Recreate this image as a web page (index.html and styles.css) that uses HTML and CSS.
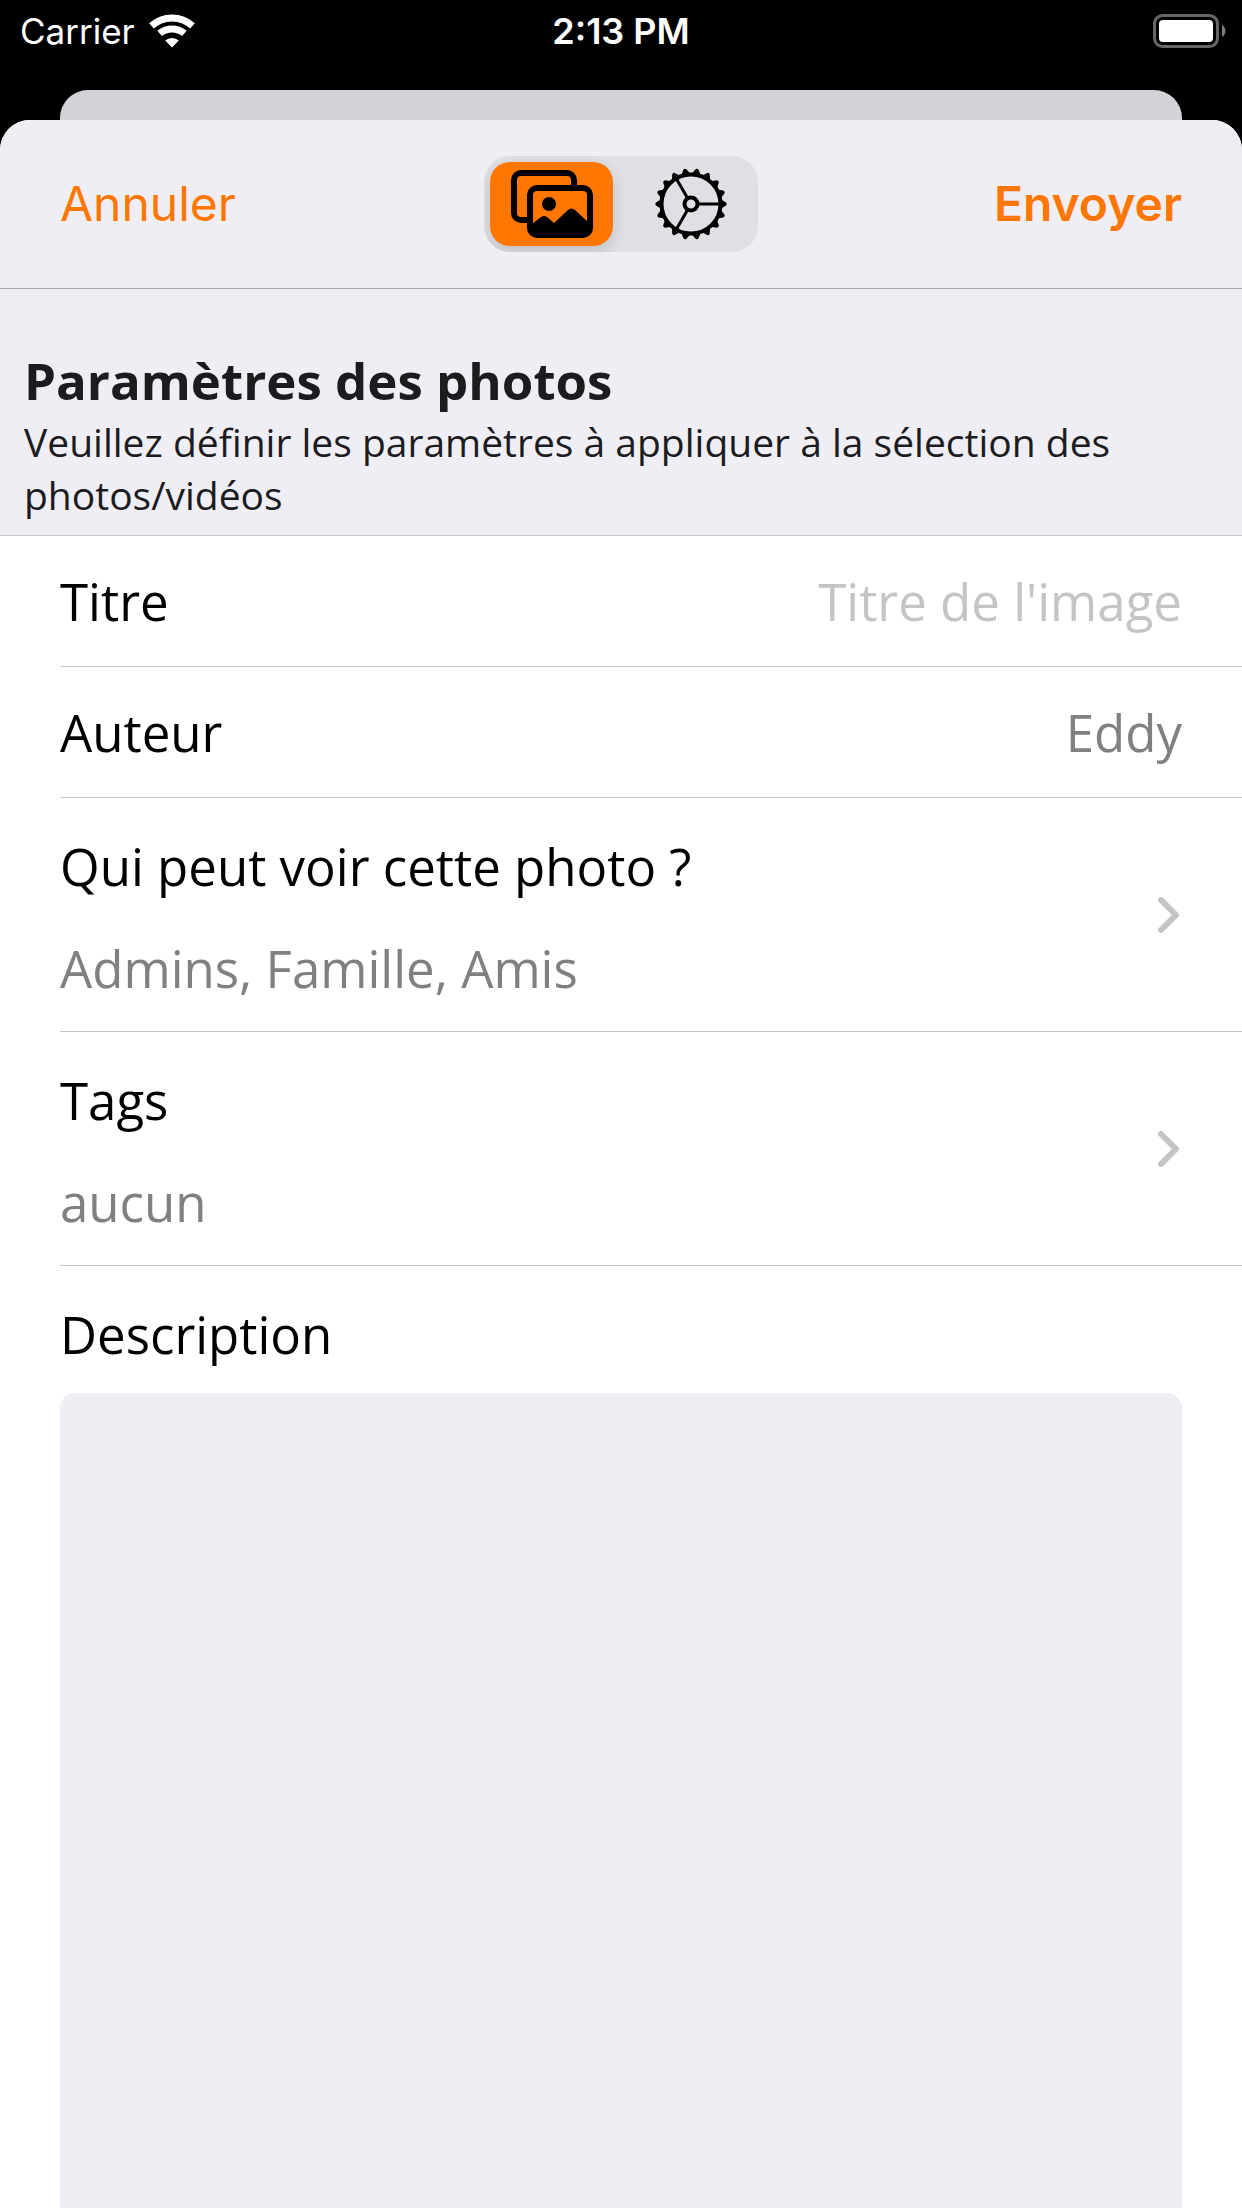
FILE: index.html
```html
<!DOCTYPE html>
<html lang="fr">
<head>
<meta charset="utf-8">
<meta name="viewport" content="width=device-width">
<title>Paramètres des photos</title>
<link rel="stylesheet" href="styles.css">
</head>
<body>
<div class="status">
  <div class="carrier">
    <span>Carrier</span>
    <svg class="wifi" viewBox="0 0 46 34" aria-hidden="true">
      <path d="M23 33.500 L16.200 26.600 A10.200 10.200 0 0 1 29.800 26.600 Z"/>
      <path class="arc" d="M10.600 19.400 A19.400 19.400 0 0 1 35.400 19.400"/>
      <path class="arc" d="M2.500 11.800 A30.500 30.500 0 0 1 43.500 11.800"/>
    </svg>
  </div>
  <time class="clock">2:13 PM</time>
  <svg class="battery" viewBox="0 0 73 34" aria-hidden="true">
    <rect class="shell" x="1.500" y="1.500" width="63" height="31" rx="8"/>
    <rect class="charge" x="6" y="6" width="54" height="22" rx="4"/>
    <path class="tip" d="M69 11 A7 7 0 0 1 69 23 Z"/>
  </svg>
</div>
<div class="peek"></div>
<main class="sheet">
  <header class="bar">
    <button class="action cancel" type="button">Annuler</button>
    <div class="segments">
      <button class="segment selected" type="button" aria-pressed="true" aria-label="Photos">
        <svg class="photos" viewBox="0 0 82 68" aria-hidden="true">
          <path class="frame" d="M16 50 H10 A7 7 0 0 1 3 43 V10 A7 7 0 0 1 10 3 H56 A7 7 0 0 1 63 10 V16"/>
          <rect class="frame" x="19" y="18" width="60" height="47" rx="7"/>
          <circle cx="38" cy="34" r="7"/>
          <path d="M21 54 L30 47 Q33 45 36 47 L43 53 L57 40 Q60.500 37 64 40 L77 52 V60 Q77 64 73 64 H25 Q21 64 21 60 Z"/>
        </svg>
      </button>
      <button class="segment" type="button" aria-pressed="false" aria-label="Réglages">
        <svg class="gear" viewBox="-37 -37 74 74" aria-hidden="true">
          <defs>
            <path id="tooth" d="M29 -5 L31 -4 L35 -1.500 Q36.500 0 35 1.500 L31 4 L29 5 Z"/>
            <g id="teeth">
              <use href="#tooth"/>
              <use href="#tooth" transform="rotate(20)"/>
              <use href="#tooth" transform="rotate(40)"/>
              <use href="#tooth" transform="rotate(60)"/>
              <use href="#tooth" transform="rotate(80)"/>
              <use href="#tooth" transform="rotate(100)"/>
            </g>
          </defs>
          <use href="#teeth"/>
          <use href="#teeth" transform="rotate(120)"/>
          <use href="#teeth" transform="rotate(240)"/>
          <circle class="rim" r="29.500"/>
          <circle class="rim" r="6.500"/>
          <path class="spoke" d="M7 0 H29 M-3.500 6.100 L-14.500 25.100 M-3.500 -6.100 L-14.500 -25.100"/>
        </svg>
      </button>
    </div>
    <button class="action send" type="button">Envoyer</button>
  </header>

  <section class="intro">
    <h1>Paramètres des photos</h1>
    <p>Veuillez définir les paramètres à appliquer à la sélection des photos/vidéos</p>
  </section>

  <form class="fields">
    <div class="row">
      <label for="title">Titre</label>
      <input id="title" type="text" placeholder="Titre de l'image">
    </div>
    <div class="row">
      <label for="author">Auteur</label>
      <input id="author" type="text" value="Eddy">
    </div>
    <button class="row link" type="button">
      <span class="pair"><span>Qui peut voir cette photo ?</span><span class="value">Admins, Famille, Amis</span></span>
      <svg class="chevron" viewBox="0 0 24 36" aria-hidden="true"><path d="M3 3 L18 18 L3 33"/></svg>
    </button>
    <button class="row link" type="button">
      <span class="pair"><span>Tags</span><span class="value">aucun</span></span>
      <svg class="chevron" viewBox="0 0 24 36" aria-hidden="true"><path d="M3 3 L18 18 L3 33"/></svg>
    </button>
    <div class="description">
      <label for="description">Description</label>
      <textarea id="description"></textarea>
    </div>
  </form>
</main>
</body>
</html>
```
FILE: styles.css
```css
* {
  box-sizing: border-box;
}

body {
  margin: 0;
  min-height: 100vh;
  display: flex;
  flex-direction: column;
  background: #000;
  color: #000;
  font-family: "Open Sans", "Noto Sans", sans-serif;
  font-size: 51px;
  line-height: 70px;
}

button,
input,
textarea {
  margin: 0;
  padding: 0;
  border: 0;
  background: none;
  color: inherit;
  font: inherit;
}

/* Status bar */
.status {
  display: grid;
  grid-template-columns: 1fr auto 1fr;
  align-items: center;
  height: 90px;
  padding: 0 16px 28px;
  color: #fff;
  font-family: Inter, "Liberation Sans", sans-serif;
  font-size: 36px;
  line-height: 60px;
}

.carrier {
  display: flex;
  align-items: center;
  gap: 14px;
  padding-left: 4px;
  font-size: 35px;
}

.wifi {
  width: 46px;
  height: 34px;
  fill: #fff;
}

.arc {
  fill: none;
  stroke: #fff;
  stroke-width: 7;
}

.clock {
  font-weight: 600;
}

.battery {
  justify-self: end;
  width: 73px;
  height: 34px;
}

.shell {
  fill: none;
  stroke: #666;
  stroke-width: 3;
}

.charge {
  fill: #fff;
}

.tip {
  fill: #808080;
}

/* Edge of the screen behind the sheet */
.peek {
  height: 30px;
  margin: 0 60px;
  border-radius: 28px 28px 0 0;
  background: #d3d2d7;
}

.sheet {
  flex: 1;
  display: flex;
  flex-direction: column;
  border-radius: 30px 30px 0 0;
  background: #fff;
  overflow: hidden;
}

.bar {
  display: grid;
  grid-template-columns: 1fr auto 1fr;
  align-items: center;
  padding: 36px 60px;
  border-bottom: 1px solid #a8a8ac;
  background: #efeef4;
}

.action {
  color: #ff7700;
  font-family: Inter, "Liberation Sans", sans-serif;
  font-size: 48px;
}

.cancel {
  justify-self: start;
}

.send {
  justify-self: end;
  font-weight: 600;
}

.segments {
  display: flex;
  gap: 16px;
  padding: 6px;
  border-radius: 26px;
  background: #e0dfe4;
  overflow: hidden;
}

.segment {
  display: flex;
  align-items: center;
  justify-content: center;
  width: 123px;
  height: 84px;
  border-radius: 20px;
}

.selected {
  background: #ff7700;
  box-shadow: 0 6px 16px rgba(0, 0, 0, 0.14);
}

.photos {
  width: 82px;
  height: 68px;
}

.frame {
  fill: none;
  stroke: #000;
  stroke-width: 6;
}

.gear {
  width: 74px;
  height: 74px;
}

.rim {
  fill: none;
  stroke: #000;
  stroke-width: 4;
}

.spoke {
  fill: none;
  stroke: #000;
  stroke-width: 3;
}

/* Section heading */
.intro {
  padding: 56px 24px 14px;
  border-bottom: 1px solid #c6c6c8;
  background: #efeef4;
  color: #1c1c1e;
}

.intro h1 {
  margin: 0;
  font-size: 51px;
  line-height: 70px;
}

.intro p {
  margin: 0;
  font-size: 39px;
  line-height: 53px;
}

/* Fields */
.fields {
  flex: 1;
  display: flex;
  flex-direction: column;
  padding-left: 60px;
}

.row {
  display: flex;
  align-items: center;
  gap: 40px;
  padding: 30px 60px 30px 0;
  border-bottom: 1px solid #c6c6c8;
}

.row input {
  flex: 1;
  min-width: 0;
  height: 70px;
  color: #808080;
  text-align: right;
}

.row input::placeholder {
  color: #c4c4c4;
  opacity: 1;
}

.row.link {
  justify-content: space-between;
  padding: 28px 60px 28px 0;
  text-align: left;
}

.pair {
  display: flex;
  flex-direction: column;
  gap: 32px;
  padding-top: 5px;
}

.value {
  color: #808080;
}

.chevron {
  width: 24px;
  height: 36px;
  fill: none;
  stroke: #c4c4c6;
  stroke-width: 6;
  stroke-linecap: round;
  stroke-linejoin: round;
}

.description {
  flex: 1;
  display: flex;
  flex-direction: column;
  gap: 24px;
  padding: 33px 60px 0 0;
}

.description textarea {
  flex: 1;
  min-height: 300px;
  padding: 16px;
  border-radius: 15px 15px 0 0;
  background: #efeef4;
  resize: none;
}
```
